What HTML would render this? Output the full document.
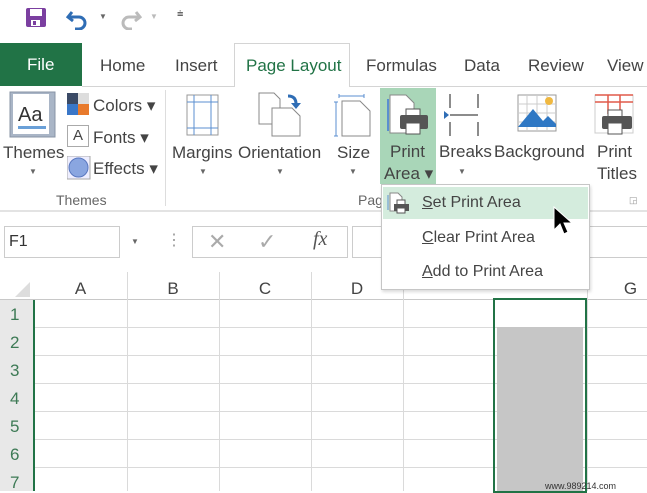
<!DOCTYPE html><html><head><style>
body{margin:0;width:647px;height:491px;overflow:hidden;background:#fff;font-family:"Liberation Sans",sans-serif;position:relative;color:#444}
.a{position:absolute;white-space:nowrap}
.t{font-size:16px;color:#444}
.r{font-size:16px;color:#444}
.ch{font-size:17px;color:#444;text-align:center}
.rh{font-size:17px;color:#3d7a55;left:10px}
.vl{position:absolute;width:1px;background:#dadada;top:300px;height:191px}
.hl{position:absolute;height:1px;background:#dadada;left:34px;width:613px}
.dd{font-size:8px;color:#666}
</style></head><body>
<svg class="a" style="left:25px;top:7px" width="24" height="22"><rect x="1" y="1" width="20" height="19" rx="2" fill="#7b3fa0"/><rect x="5" y="2" width="12" height="7" fill="#fff"/><rect x="6" y="13" width="9" height="6" fill="#fff"/><rect x="8" y="14" width="3" height="4" fill="#7b3fa0"/></svg>
<svg class="a" style="left:66px;top:8px" width="24" height="22"><path d="M6 4 L2 9 L7 13" stroke="#2f6db5" stroke-width="3" fill="none"/><path d="M3 9 H13 A6 6 0 0 1 13 21 H9" stroke="#2f6db5" stroke-width="3" fill="none"/></svg>
<div class="a dd" style="left:99px;top:12px">▼</div>
<svg class="a" style="left:118px;top:8px" width="24" height="22"><path d="M18 4 L22 9 L17 13" stroke="#bbb" stroke-width="3" fill="none"/><path d="M21 9 H11 A6 6 0 0 0 11 21 H14" stroke="#bbb" stroke-width="3" fill="none"/></svg>
<div class="a dd" style="left:150px;top:12px;color:#bbb">▼</div>
<div class="a" style="left:177px;top:8px;font-size:11px;color:#666">⩧</div>
<div class="a" style="left:0;top:43px;width:82px;height:43px;background:#217346"></div>
<div class="a" style="left:27px;top:55px;font-size:17px;color:#fff">File</div>
<div class="a t" style="left:100px;top:56px;font-size:17px">Home</div>
<div class="a t" style="left:175px;top:56px;font-size:17px">Insert</div>
<div class="a" style="left:234px;top:43px;width:116px;height:44px;border:1px solid #d4d4d4;border-bottom:none;background:#fff;box-sizing:border-box"></div>
<div class="a" style="left:246px;top:56px;font-size:17px;color:#217346">Page Layout</div>
<div class="a t" style="left:366px;top:56px;font-size:17px">Formulas</div>
<div class="a t" style="left:464px;top:56px;font-size:17px">Data</div>
<div class="a t" style="left:528px;top:56px;font-size:17px">Review</div>
<div class="a t" style="left:607px;top:56px;font-size:17px">View</div>
<div class="a" style="left:82px;top:86px;width:152px;height:1px;background:#d4d4d4"></div>
<div class="a" style="left:350px;top:86px;width:297px;height:1px;background:#d4d4d4"></div>
<div class="a" style="left:0;top:210px;width:647px;height:2px;background:#e3e3e3"></div>
<div class="a" style="left:165px;top:90px;width:1px;height:116px;background:#ddd"></div>
<svg class="a" style="left:9px;top:91px" width="48" height="48"><rect x="1" y="1" width="45" height="45" fill="#a9b5c6" stroke="#8894a6"/><rect x="4" y="3" width="36" height="40" fill="#fff"/><text x="9" y="30" font-family="Liberation Sans" font-size="20" fill="#333">Aa</text><rect x="9" y="35" width="28" height="3" fill="#6aa0d8"/></svg>
<div class="a r" style="left:3px;top:143px;font-size:17px">Themes</div>
<div class="a dd" style="left:29px;top:167px">▼</div>
<svg class="a" style="left:67px;top:93px" width="22" height="22"><rect x="0" y="0" width="11" height="11" fill="#3b4a66"/><rect x="11" y="0" width="11" height="11" fill="#ddd"/><rect x="0" y="11" width="11" height="11" fill="#3a77c8"/><rect x="11" y="11" width="11" height="11" fill="#e87a2c"/></svg>
<div class="a r" style="left:93px;top:96px;font-size:17px">Colors ▾</div>
<div class="a" style="left:67px;top:125px;width:20px;height:20px;border:1px solid #aaa;font-size:15px;text-align:center;line-height:20px">A</div>
<div class="a r" style="left:93px;top:128px;font-size:17px">Fonts ▾</div>
<svg class="a" style="left:67px;top:156px" width="24" height="24"><rect x="0" y="0" width="23" height="23" fill="#eef" stroke="#aaa"/><circle cx="11.5" cy="11.5" r="9.5" fill="#8aa6e0" stroke="#5a78c0"/></svg>
<div class="a r" style="left:93px;top:159px;font-size:17px">Effects ▾</div>
<div class="a" style="left:56px;top:192px;font-size:14px;color:#666">Themes</div>
<svg class="a" style="left:186px;top:94px" width="34" height="42"><rect x="1" y="1" width="31" height="40" fill="#fff" stroke="#999"/><path d="M8 1V41M25 1V41M1 8H32M1 34H32" stroke="#5b8fd0"/></svg>
<div class="a r" style="left:172px;top:143px;font-size:17px">Margins</div>
<div class="a dd" style="left:199px;top:167px">▼</div>
<svg class="a" style="left:258px;top:92px" width="46" height="46"><path d="M1 1H16L22 7V32H1Z" fill="#fff" stroke="#888"/><path d="M14 16H34L42 24V44H14Z" fill="#fff" stroke="#888"/><path d="M30 4 Q38 4 38 12" stroke="#2f6db5" stroke-width="3" fill="none"/><path d="M33 11L38 17L43 11" fill="#2f6db5"/></svg>
<div class="a r" style="left:238px;top:143px;font-size:17px">Orientation</div>
<div class="a dd" style="left:276px;top:167px">▼</div>
<svg class="a" style="left:334px;top:94px" width="40" height="44"><path d="M5 2H30M5 0V4M30 0V4M2 8V42M0 8H4M0 42H4" stroke="#5b8fd0"/><path d="M8 7H26L36 17V42H8Z" fill="#fff" stroke="#888"/></svg>
<div class="a r" style="left:337px;top:143px;font-size:17px">Size</div>
<div class="a dd" style="left:349px;top:167px">▼</div>
<div class="a" style="left:380px;top:88px;width:56px;height:96px;background:#a9d6b8"></div>
<svg class="a" style="left:386px;top:93px" width="46" height="46"><path d="M4 2H20L28 10V40H4Z" fill="#fff" stroke="#888"/><path d="M2 6V38" stroke="#5b8fd0" stroke-width="2"/><rect x="20" y="16" width="14" height="8" fill="#fff" stroke="#555"/><rect x="14" y="22" width="28" height="14" rx="2" fill="#555"/><rect x="20" y="30" width="14" height="11" fill="#fff" stroke="#555"/></svg>
<div class="a r" style="left:390px;top:142px;font-size:17px">Print</div>
<div class="a r" style="left:384px;top:164px;font-size:17px">Area ▾</div>
<svg class="a" style="left:442px;top:92px" width="40" height="46"><path d="M8 2V16M36 2V16M8 30V44M36 30V44M8 23H36" stroke="#666" stroke-width="1.5"/><path d="M2 19L7 23L2 27Z" fill="#2f6db5"/></svg>
<div class="a r" style="left:439px;top:142px;font-size:17px">Breaks</div>
<div class="a dd" style="left:458px;top:167px">▼</div>
<svg class="a" style="left:517px;top:94px" width="40" height="38"><rect x="1" y="1" width="38" height="36" fill="#fff" stroke="#999"/><path d="M1 10H39M1 19H39M1 28H39M10 1V37M20 1V37M30 1V37" stroke="#ccc"/><circle cx="32" cy="7" r="4" fill="#f0b840"/><path d="M1 33L16 15L26 27L31 22L39 30V33Z" fill="#2f78c4"/></svg>
<div class="a r" style="left:494px;top:142px;font-size:17px">Background</div>
<svg class="a" style="left:594px;top:94px" width="44" height="44"><rect x="1" y="1" width="38" height="38" fill="#fff" stroke="#ccc"/><path d="M1 1H39M1 8H39M14 1V20M26 1V20" stroke="#e05a4a" stroke-width="1.5"/><rect x="14" y="16" width="14" height="8" fill="#fff" stroke="#555"/><rect x="8" y="22" width="30" height="13" rx="2" fill="#555"/><rect x="14" y="29" width="14" height="11" fill="#fff" stroke="#555"/></svg>
<div class="a r" style="left:597px;top:142px;font-size:17px">Print</div>
<div class="a r" style="left:597px;top:164px;font-size:17px">Titles</div>
<div class="a" style="left:358px;top:192px;font-size:14px;color:#666">Pag</div>
<div class="a" style="left:629px;top:195px;font-size:9px;color:#999">◲</div>
<div class="a" style="left:4px;top:226px;width:116px;height:32px;border:1px solid #ccc;box-sizing:border-box"></div>
<div class="a" style="left:9px;top:233px;font-size:16px;color:#333">F1</div>
<div class="a dd" style="left:131px;top:237px">▼</div>
<div class="a" style="left:166px;top:230px;font-size:16px;color:#999">⋮</div>
<div class="a" style="left:192px;top:226px;width:156px;height:32px;border:1px solid #ccc;box-sizing:border-box"></div>
<div class="a" style="left:208px;top:229px;font-size:22px;color:#aaa">✕</div>
<div class="a" style="left:258px;top:229px;font-size:22px;color:#aaa">✓</div>
<div class="a" style="left:313px;top:228px;font-size:20px;color:#555;font-family:'Liberation Serif',serif;font-style:italic">fx</div>
<div class="a" style="left:352px;top:226px;width:295px;height:32px;border-top:1px solid #ccc;border-bottom:1px solid #ccc;border-left:1px solid #ccc;box-sizing:border-box"></div>
<div class="a" style="left:0;top:272px;width:647px;height:28px;background:#fff"></div>
<div class="a" style="left:0;top:300px;width:34px;height:191px;background:#e8e8e8"></div>
<div class="a" style="left:0;top:299px;width:647px;height:1px;background:#c8c8c8"></div>
<svg class="a" style="left:12px;top:280px" width="20" height="18"><path d="M18 2V17H3Z" fill="#ddd"/></svg>
<div class="vl" style="left:127px;top:272px;height:219px"></div><div class="vl" style="left:219px;top:272px;height:219px"></div><div class="vl" style="left:311px;top:272px;height:219px"></div><div class="vl" style="left:403px;top:272px;height:219px"></div><div class="vl" style="left:587px;top:272px;height:219px"></div>
<div class="hl" style="top:327px"></div><div class="hl" style="top:355px"></div><div class="hl" style="top:383px"></div><div class="hl" style="top:411px"></div><div class="hl" style="top:439px"></div><div class="hl" style="top:467px"></div>
<div class="a ch" style="left:34px;top:279px;width:93px">A</div>
<div class="a ch" style="left:127px;top:279px;width:92px">B</div>
<div class="a ch" style="left:219px;top:279px;width:92px">C</div>
<div class="a ch" style="left:311px;top:279px;width:92px">D</div>
<div class="a ch" style="left:587px;top:279px;width:87px">G</div>
<div class="a rh" style="top:305px">1</div><div class="a rh" style="top:333px">2</div><div class="a rh" style="top:361px">3</div><div class="a rh" style="top:389px">4</div><div class="a rh" style="top:417px">5</div><div class="a rh" style="top:445px">6</div><div class="a rh" style="top:473px">7</div>
<div class="a" style="left:33px;top:300px;width:2px;height:191px;background:#217346"></div>
<div class="a" style="left:497px;top:327px;width:86px;height:164px;background:#c6c6c6"></div>
<div class="a" style="left:493px;top:298px;width:94px;height:195px;border:2px solid #217346;box-sizing:border-box"></div>
<div class="a" style="left:545px;top:481px;font-size:9px;color:#333">www.989214.com</div>
<div class="a" style="left:381px;top:184px;width:209px;height:106px;background:#fff;border:1px solid #c6c6c6;box-sizing:border-box;box-shadow:1px 2px 3px rgba(0,0,0,.15)"></div>
<div class="a" style="left:383px;top:187px;width:205px;height:32px;background:#d4ecdd"></div>
<svg class="a" style="left:387px;top:192px" width="24" height="22"><path d="M3 1H11L15 5V19H3Z" fill="#fff" stroke="#888"/><path d="M1 3V18" stroke="#5b8fd0"/><rect x="10" y="8" width="8" height="5" fill="#fff" stroke="#555"/><rect x="7" y="12" width="15" height="7" fill="#555"/><rect x="10" y="16" width="8" height="5" fill="#fff" stroke="#555"/></svg>
<div class="a" style="left:422px;top:194px;font-size:16px;color:#444"><u>S</u>et Print Area</div>
<div class="a" style="left:422px;top:229px;font-size:16px;color:#444"><u>C</u>lear Print Area</div>
<div class="a" style="left:422px;top:263px;font-size:16px;color:#444"><u>A</u>dd to Print Area</div>
<svg class="a" style="left:552px;top:206px" width="20" height="30"><path d="M2 1V24L8 18L12 28L16 26L12 17H20Z" fill="#000" stroke="#fff"/></svg>
</body></html>
